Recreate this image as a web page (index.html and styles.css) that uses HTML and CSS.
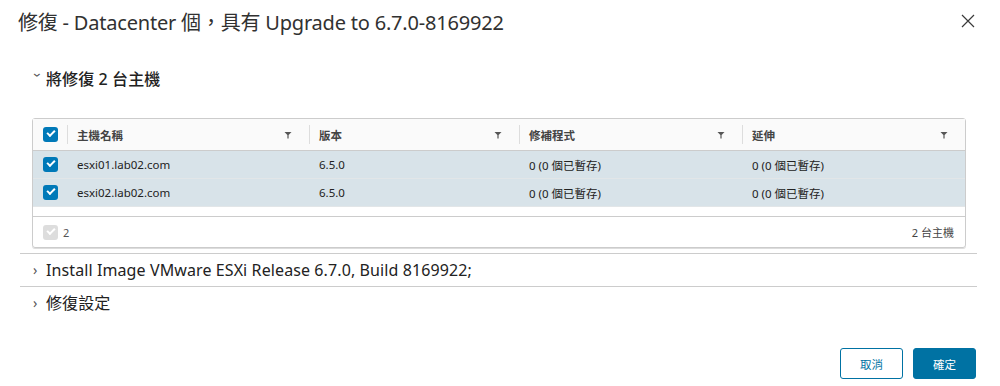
FILE: index.html
```html
<!doctype html>
<html lang="zh-Hant">
    <head>
        <title>修復</title>
        <link rel="stylesheet" href="styles.css">
    </head>
    <body>
        <div class="dialog">
            <div class="dialog-header">
                <h2 class="dialog-title">修復 - Datacenter 個，具有 Upgrade to 6.7.0-8169922</h2>
                <button class="close-btn" aria-label="close">
                    <svg width="14" height="14" viewBox="0 0 14 14">
                        <path d="M1 1 L13 13 M13 1 L1 13" stroke="#3a3a3a" stroke-width="1.2" fill="none" />
                    </svg>
                </button>
            </div>

            <div class="section open">
                <div class="section-head">
                    <span class="chev down">›</span>
                    <span class="section-title">將修復 2 台主機</span>
                </div>
                <div class="grid">
                    <div class="grid-row grid-head">
                        <div class="cell cell-check"><span class="cbox"></span></div>
                        <div class="cell col-host">主機名稱<svg class="filter" viewBox="0 0 8 8"><path d="M0.5 1 H7.5 L4.6 4 V7.5 H3.4 V4 Z" /></svg></div>
                        <div class="cell col-ver">版本<svg class="filter" viewBox="0 0 8 8"><path d="M0.5 1 H7.5 L4.6 4 V7.5 H3.4 V4 Z" /></svg></div>
                        <div class="cell col-patch">修補程式<svg class="filter" viewBox="0 0 8 8"><path d="M0.5 1 H7.5 L4.6 4 V7.5 H3.4 V4 Z" /></svg></div>
                        <div class="cell col-ext">延伸<svg class="filter" viewBox="0 0 8 8"><path d="M0.5 1 H7.5 L4.6 4 V7.5 H3.4 V4 Z" /></svg></div>
                    </div>
                    <div class="grid-row selected">
                        <div class="cell cell-check"><span class="cbox"></span></div>
                        <div class="cell col-host">esxi01.lab02.com</div>
                        <div class="cell col-ver">6.5.0</div>
                        <div class="cell col-patch">0 (0 個已暫存)</div>
                        <div class="cell col-ext">0 (0 個已暫存)</div>
                    </div>
                    <div class="grid-row selected">
                        <div class="cell cell-check"><span class="cbox"></span></div>
                        <div class="cell col-host">esxi02.lab02.com</div>
                        <div class="cell col-ver">6.5.0</div>
                        <div class="cell col-patch">0 (0 個已暫存)</div>
                        <div class="cell col-ext">0 (0 個已暫存)</div>
                    </div>
                    <div class="grid-spacer"></div>
                    <div class="grid-foot">
                        <div class="foot-left"><span class="cbox disabled"></span><span class="foot-count">2</span></div>
                        <div class="foot-right">2 台主機</div>
                    </div>
                </div>
            </div>

            <div class="section">
                <div class="section-head">
                    <span class="chev">›</span>
                    <span class="section-title">Install Image VMware ESXi Release 6.7.0, Build 8169922;</span>
                </div>
            </div>

            <div class="section last">
                <div class="section-head">
                    <span class="chev">›</span>
                    <span class="section-title">修復設定</span>
                </div>
            </div>

            <div class="dialog-footer">
                <button class="btn btn-outline">取消</button>
                <button class="btn btn-primary">確定</button>
            </div>
        </div>
    </body>
</html>
```

FILE: styles.css
```css
body {
    font-family: "Noto Sans", "Noto Sans CJK TC", sans-serif;
    background: #fff;
    color: #313131;
    margin: 0;
    padding: 0;
}
.dialog {
    width: 1000px;
    height: 386px;
    box-sizing: border-box;
    padding: 0 23px 0 20px;
    display: flex;
    flex-direction: column;
}
.dialog-header {
    display: flex;
    justify-content: space-between;
    align-items: center;
    height: 42px;
}
.dialog-title {
    margin: 0 0 0 -2px;
    font-size: 20px;
    font-weight: 400;
    color: #313131;
    letter-spacing: -0.2px;
}
.close-btn {
    background: none;
    border: none;
    padding: 0;
    margin: 0 2px 0 0;
    width: 14px;
    height: 14px;
    cursor: pointer;
}
.section {
    border-bottom: 1px solid #ccc;
}
.section.open {
    padding-bottom: 5px;
}
.section.last {
    border-bottom: none;
}
.section-head {
    display: flex;
    align-items: center;
    padding-left: 13px;
    height: 32px;
}
.section.open .section-head {
    margin-top: 20px;
    margin-bottom: 24px;
}
.chev {
    width: 13px;
    font-size: 14px;
    color: #555;
    line-height: 1;
}
.chev.down {
    display: inline-block;
    transform: rotate(90deg);
    width: 10px;
    margin-right: 3px;
}
.section-title {
    font-size: 16px;
    color: #222;
    letter-spacing: 0.1px;
}
.section.last .section-title {
    margin-top: -3px;
}
.section.open .section-title {
    font-weight: 500;
}
/* grid */
.grid {
    margin: 0 11px 0 12px;
    border: 1px solid #ccc;
    border-radius: 3px;
    box-shadow: 0 1px 0 #ddd;
    font-size: 11.5px;
}
.grid-row {
    display: flex;
    height: 27px;
    align-items: center;
    border-bottom: 1px solid #e2e6e8;
}
.grid-head {
    height: 31px;
    background: #fafafa;
    border-bottom: 1px solid #ccc;
    font-weight: 700;
    color: #444;
}
.grid-row.selected {
    background: #d8e3e9;
    color: #222;
}
.cell {
    box-sizing: border-box;
    padding-left: 10px;
    height: 100%;
    display: flex;
    align-items: center;
    position: relative;
}
.cell-check {
    width: 34px;
    padding-left: 10px;
}
.col-host { width: 242px; }
.col-ver { width: 210px; }
.col-patch { width: 223px; }
.col-ext { flex: 1; }
.grid-head .cell + .cell::before {
    content: "";
    position: absolute;
    left: 0;
    top: 6px;
    bottom: 6px;
    border-left: 1px solid #ddd;
}
.filter {
    position: absolute;
    right: 17px;
    width: 8px;
    height: 8px;
    fill: #555;
}
.cbox {
    display: inline-block;
    width: 15px;
    height: 15px;
    border-radius: 3px;
    background: #0079b8;
    position: relative;
}
.cbox::after {
    content: "";
    position: absolute;
    left: 4px;
    top: 3px;
    width: 6px;
    height: 3px;
    border-left: 2px solid #fff;
    border-bottom: 2px solid #fff;
    transform: rotate(-45deg);
}
.cbox.disabled {
    background: #ddd;
}
.grid-spacer {
    height: 9px;
    border-bottom: 1px solid #ccc;
}
.grid-foot {
    display: flex;
    justify-content: space-between;
    align-items: center;
    height: 30px;
    padding: 0 11px 0 10px;
    color: #555;
    font-size: 11px;
}
.foot-left {
    display: flex;
    align-items: center;
    gap: 5px;
}
.foot-right {
    color: #444;
}
.dialog-footer {
    margin-top: auto;
    display: flex;
    justify-content: flex-end;
    gap: 10px;
    padding: 0 1px 7px 0;
}
.btn {
    width: 63px;
    height: 31px;
    border-radius: 3px;
    font-family: inherit;
    font-size: 11.5px;
    cursor: pointer;
}
.btn-outline {
    background: #fff;
    border: 1px solid #0072a3;
    color: #0072a3;
}
.btn-primary {
    background: #0072a3;
    border: 1px solid #0072a3;
    color: #fff;
}
```
